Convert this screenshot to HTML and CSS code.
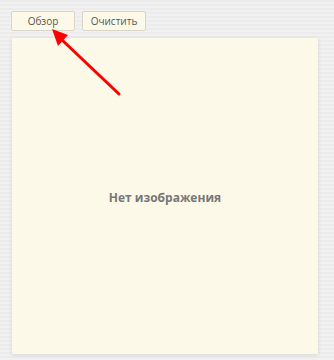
FILE: index.html
```html
<!DOCTYPE html>
<html lang="ru">
<head>
  <meta charset="UTF-8">
  <title>Изображение</title>
  <link rel="stylesheet" href="styles.css">
</head>
<body>

  <!-- Buttons -->
  <div class="toolbar">
    <button class="btn">Обзор</button>
    <button class="btn">Очистить</button>
  </div>

  <!-- Preview area -->
  <div class="preview">
    <span class="empty-text">Нет изображения</span>
  </div>

  <!-- Pointer arrow -->
  <svg class="arrow" width="334" height="360" viewBox="0 0 334 360">
    <line x1="119" y1="94" x2="61" y2="39" stroke="#ff0000" stroke-width="3" stroke-linecap="round"/>
    <polygon points="52,29 68,35 58,46" fill="#ff0000"/>
  </svg>

</body>
</html>
```

FILE: styles.css
```css
* {
  box-sizing: border-box;
  margin: 0;
  padding: 0;
}

body {
  font-family: "Open Sans", Arial, sans-serif;
  background-color: #efefef;
  background-image: repeating-linear-gradient(0deg, #f1f1f1 0, #f1f1f1 2px, #ececec 2px, #ececec 4px);
  width: 334px;
  height: 360px;
  padding: 11px 0 0 11px;
  position: relative;
  overflow: hidden;
}

.toolbar {
  display: flex;
  gap: 7px;
}

.btn {
  width: 64px;
  height: 20px;
  background-color: #fdf9e8;
  border: 1px solid #d9d5c7;
  border-radius: 2px;
  font-family: "Open Sans", Arial, sans-serif;
  font-size: 10px;
  color: #555;
  cursor: pointer;
}

.preview {
  margin: 7px 0 0 1px;
  width: 306px;
  height: 316px;
  background-color: #fdf9e8;
  box-shadow: 0 1px 4px rgba(0, 0, 0, 0.12);
  display: flex;
  justify-content: center;
  align-items: center;
}

.empty-text {
  font-size: 12px;
  font-weight: bold;
  color: #777;
  margin-top: 2px;
}

.arrow {
  position: absolute;
  top: 0;
  left: 0;
}
```
